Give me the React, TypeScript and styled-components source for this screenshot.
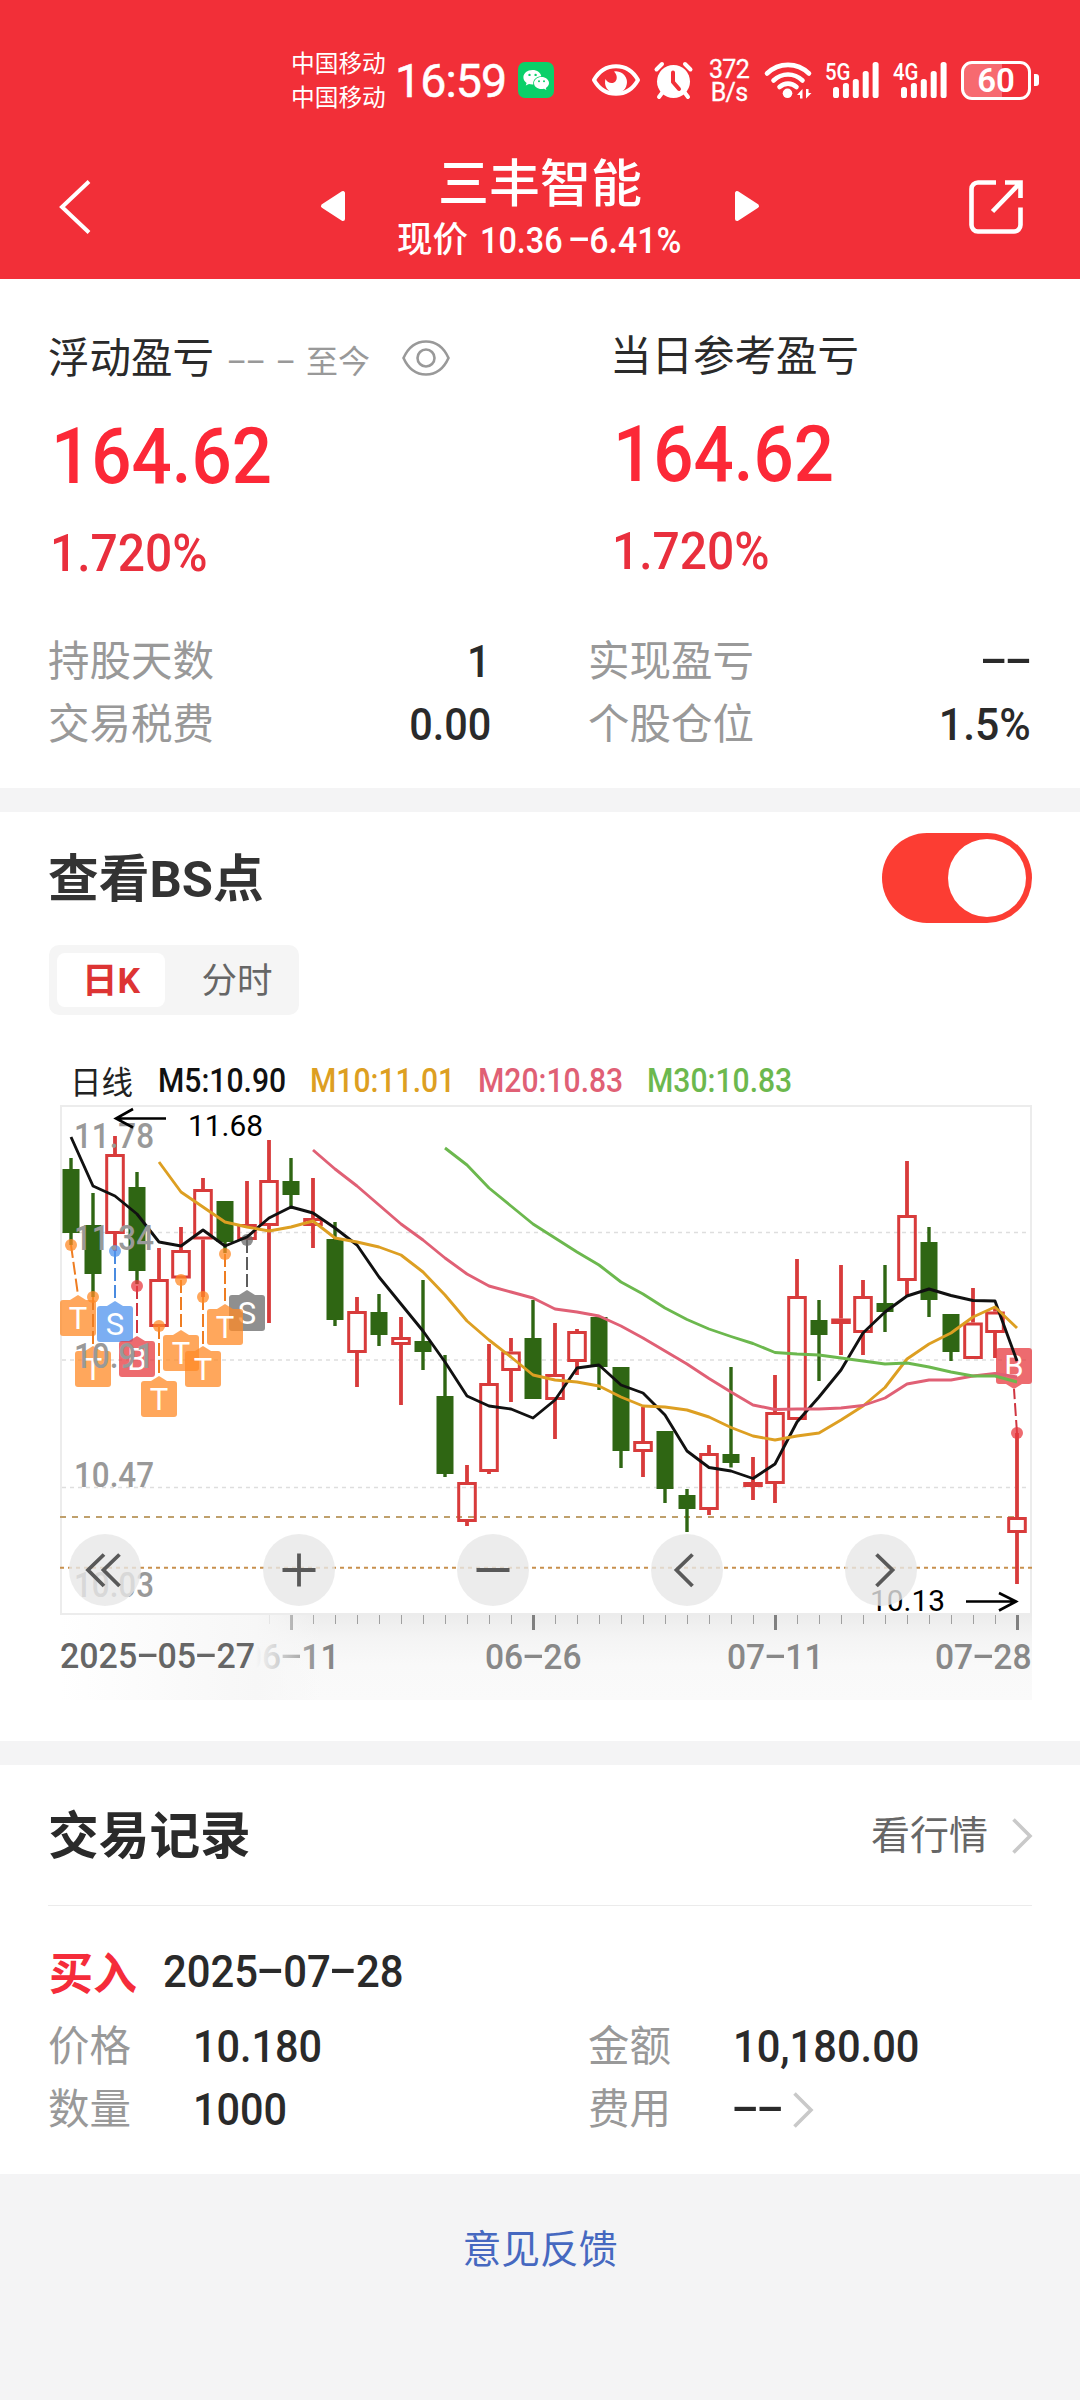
import React from "react";
import styled, { createGlobalStyle } from "styled-components";

const FONT = `Roboto, "Noto Sans CJK SC", sans-serif`;

const GlobalStyle = createGlobalStyle`
  * { box-sizing: border-box; }
  html, body { margin: 0; padding: 0; background: #f4f4f5; }
  body { font-family: ${FONT}; color: #2a2a2a; }
  svg { display: block; flex: none; overflow: visible; }
`;

const Page = styled.main`
  width: 1080px;
  min-height: 2400px;
  background: #f4f4f5;
  overflow: hidden;
`;

/* ---------- shared text pieces ---------- */

const NumBox = styled.span<{ $size: number; $k: number; $right?: boolean; $weight?: number; $color?: string }>`
  display: inline-block;
  flex: none;
  white-space: nowrap;
  font-size: ${(p) => p.$size}px;
  font-weight: ${(p) => p.$weight ?? 500};
  line-height: 1;
  color: ${(p) => p.$color ?? "inherit"};
  transform: scaleX(${(p) => p.$k});
  transform-origin: ${(p) => (p.$right ? "right" : "left")} center;
`;

const DashBox = styled.span`
  display: inline-block;
  width: 0.6em;
  text-align: center;
  transform: translateY(-0.065em) scaleX(2);
`;

type NumProps = { children: string; size: number; k?: number; right?: boolean; weight?: number; color?: string };

const Num = ({ children, size, k = 0.92, right, weight, color }: NumProps) => (
  <NumBox $size={size} $k={k} $right={right} $weight={weight} $color={color}>
    {children.split(/(-)/).map((part, i) => (part === "-" ? <DashBox key={i}>-</DashBox> : part))}
  </NumBox>
);

/* ---------- header ---------- */

const Header = styled.header`
  height: 279px;
  padding-top: 44px;
  background: #f22f38;
  color: #fff;
`;

const StatusBar = styled.div`
  display: flex;
  align-items: center;
  height: 72px;
  padding-left: 291px;
`;

const Carrier = styled.div`
  width: 104px;
  padding-top: 1px;
  font-size: 23.7px;
  line-height: 34px;
  white-space: nowrap;
`;

const Clock = styled.div`
  width: 123px;
  padding-top: 2px;
  font-size: 46.5px;
  font-weight: 400;
  line-height: 72px;
  letter-spacing: -0.9px;
  -webkit-text-stroke: 0.5px #fff;
`;

const StatusIcon = styled.div<{ $gap: number }>`
  margin-left: ${(p) => p.$gap}px;
  flex: none;
`;

const NetSpeed = styled.div`
  width: 40px;
  margin-left: 16px;
  padding-top: 1px;
  font-size: 25px;
  font-weight: 400;
  line-height: 23px;
  letter-spacing: -0.7px;
  text-align: center;
  -webkit-text-stroke: 0.3px #fff;
`;

const SignalBox = styled.div<{ $gap: number }>`
  display: flex;
  width: 56px;
  height: 36px;
  margin-left: ${(p) => p.$gap}px;
`;

const SignalTag = styled.span`
  width: 8px;
  height: 20px;
  font-size: 24px;
  font-weight: 500;
  line-height: 20px;
  white-space: nowrap;
  transform: scaleX(0.85);
  transform-origin: left center;
`;

const NavBar = styled.div`
  display: flex;
  align-items: center;
  height: 163px;
  padding: 19px 0 0 58px;
`;

const TitleBlock = styled.div`
  width: 320px;
  margin: 12px 34px 0;
`;

const StockName = styled.h1`
  margin: 0;
  font-size: 51px;
  font-weight: 500;
  line-height: 56px;
  text-align: center;
`;

const PriceLine = styled.div`
  display: flex;
  align-items: center;
  height: 56px;
  padding-left: 17px;
  font-size: 35.5px;
  font-weight: 500;
`;

const PriceCell = styled.span<{ $w: number }>`
  width: ${(p) => p.$w}px;
  flex: none;
  white-space: nowrap;
  line-height: 1;
`;

const BackIcon = styled.svg`
  margin-right: 226px;
`;
const ShareIcon = styled.svg`
  margin-left: 208px;
`;

const SignalBars = () => (
  <svg width="48" height="36" viewBox="0 0 48 36">
    {[0, 1, 2, 3, 4].map((i) => {
      const h = [11, 15, 19, 27, 36][i];
      return <rect key={i} x={i * 9.9} y={36 - h} width="6" height={h} rx="2.6" fill="#fff" />;
    })}
  </svg>
);

const Signal = ({ tag, gap }: { tag: string; gap: number }) => (
  <SignalBox $gap={gap}>
    <SignalTag>{tag}</SignalTag>
    <SignalBars />
  </SignalBox>
);

const WeChat = () => (
  <svg width="36" height="36" viewBox="0 0 36 36">
    <rect width="36" height="36" rx="7" fill="#0bd069" />
    <path d="M14.500 8c-5.100 0-9.100 3.200-9.100 7.300 0 2.300 1.200 4.200 3.200 5.600L7.800 23.400l3.200-1.500c1.100.3 2.200.5 3.500.5h.8c-.7-4.500 3.300-8.300 8-8.100C22.700 10.600 19.100 8 14.500 8z" fill="#fff" />
    <path d="M31 21c0-3.400-3.400-6.100-7.500-6.100S16 17.600 16 21s3.400 6.100 7.500 6.100c.9 0 1.700-.1 2.500-.3l2.400 1.300-.6-2.200C29.700 24.800 31 23 31 21z" fill="#fff" />
    <g fill="#0bd069">
      <circle cx="11.500" cy="12.900" r="1.200" />
      <circle cx="17.600" cy="12.900" r="1.200" />
      <circle cx="21" cy="19.200" r="1" />
      <circle cx="26" cy="19.200" r="1" />
    </g>
  </svg>
);

const StatusEye = () => (
  <svg width="48" height="34" viewBox="0 0 48 34" fill="none">
    <path d="M2 17C7 8 15 3.200 24 3.200S41 8 46 17c-5 9-13 13.800-22 13.800S7 26 2 17z" stroke="#fff" strokeWidth="4" strokeLinejoin="round" />
    <path d="M22 8.500a11 11 0 1 1-8.500 7.500c1.800 3.600 5.500 5 8.500 3.500 3.600-1.800 3.800-7.500 0-11z" fill="#fff" />
  </svg>
);

const Alarm = () => (
  <svg width="39" height="38" viewBox="0 0 39 38" fill="none">
    <circle cx="19.500" cy="20.500" r="16.500" fill="#fff" />
    <path d="M2.500 8.500l5.500-5.500M36.500 8.500L31 3M8 32l-3 4M31 32l3 4" stroke="#fff" strokeWidth="4" strokeLinecap="round" />
    <path d="M19 11.500V21l6 7" stroke="#f22f38" strokeWidth="4" strokeLinecap="round" strokeLinejoin="round" />
  </svg>
);

const Wifi = () => (
  <svg width="48" height="38" viewBox="0 0 48 38" fill="none" stroke="#fff" strokeWidth="4.600" strokeLinecap="round">
    <path d="M3 12.500C15 1 33 1 45 12.500" />
    <path d="M9.500 19.500C18 11.500 30 11.500 38.500 19.500" />
    <path d="M15.500 26C20.500 21.500 27.500 21.500 32.500 26" />
    <circle cx="23.500" cy="32.300" r="4.800" fill="#fff" stroke="none" />
    <path d="M33 34l5.500-6v9.500H36V34zM47.500 32L42 37.500V28h2.500v4z" fill="#fff" stroke="none" />
  </svg>
);

const BatteryWrap = styled.div`
  display: flex;
  align-items: center;
  margin-left: 12px;
`;
const BatteryCell = styled.div`
  width: 70px;
  height: 39px;
  border: 3px solid #fff;
  border-radius: 11px;
  background: linear-gradient(to right, #f76a70 60%, transparent 60%);
  font-size: 33px;
  font-weight: 600;
  line-height: 34px;
  text-align: center;
`;
const BatteryNub = styled.div`
  width: 5px;
  height: 12px;
  margin-left: 3px;
  border-radius: 0 3px 3px 0;
  background: #fff;
`;

/* ---------- summary ---------- */

const Card = styled.section<{ $h: number; $mb?: number }>`
  height: ${(p) => p.$h}px;
  margin-bottom: ${(p) => p.$mb ?? 0}px;
  background: #fff;
`;

const ProfitRow = styled.div`
  display: flex;
  height: 346px;
  padding-left: 48px;
`;

const ProfitCol = styled.div<{ $w: number; $top: number }>`
  width: ${(p) => p.$w}px;
  padding-top: ${(p) => p.$top}px;
`;

const ProfitHead = styled.div`
  display: flex;
  align-items: center;
  height: 60px;
  font-size: 41.5px;
  line-height: 60px;
  white-space: nowrap;
`;

const Since = styled.span`
  display: flex;
  align-items: center;
  margin: 6px 32px 0 13px;
  color: #999;
  font-size: 32px;
`;
const SinceDash = styled.span<{ $w: number }>`
  display: flex;
  width: ${(p) => p.$w}px;
`;

const BigNumber = styled.div`
  display: flex;
  align-items: center;
  height: 96px;
  margin-top: 20px;
  padding-left: 3px;
  color: #fc2837;
`;
const Percent = styled.div`
  display: flex;
  align-items: center;
  height: 70px;
  margin-top: 13px;
  padding-left: 2px;
  color: #e92f3d;
`;

const StatGrid = styled.div`
  display: grid;
  grid-template-columns: 443px 443px;
  column-gap: 97px;
  grid-auto-rows: 63px;
  padding: 5px 48px 0;
`;

const Stat = styled.div`
  display: flex;
  align-items: center;
  justify-content: space-between;
`;

const Label = styled.span<{ $w?: number }>`
  ${(p) => (p.$w ? `width: ${p.$w}px;` : "")}
  color: #999;
  font-size: 41.5px;
  line-height: 60px;
  white-space: nowrap;
`;

/* ---------- chart section ---------- */

const TitleRow = styled.div`
  display: flex;
  align-items: center;
  justify-content: space-between;
  height: 133px;
  padding: 0 48px 0 48px;
`;

const SectionTitle = styled.h2<{ $color?: string }>`
  margin: 0;
  padding-top: 3px;
  color: ${(p) => p.$color ?? "#2a2a2a"};
  font-size: 50.700px;
  font-weight: 700;
  line-height: 70px;
  white-space: nowrap;
`;

const Toggle = styled.button`
  display: flex;
  justify-content: flex-end;
  width: 150px;
  height: 90px;
  margin-top: -1px;
  padding: 6px;
  border: 0;
  border-radius: 45px;
  background: #fc3d33;
`;
const Knob = styled.span`
  width: 78px;
  height: 78px;
  border-radius: 50%;
  background: #fff;
`;

const Tabs = styled.div`
  display: flex;
  width: 250px;
  height: 70px;
  margin-left: 49px;
  padding: 8px;
  border-radius: 10px;
  background: #f5f5f5;
`;
const Tab = styled.span<{ $active?: boolean }>`
  flex: none;
  width: ${(p) => (p.$active ? 108 : 144)}px;
  padding-top: 1px;
  border-radius: 8px;
  background: ${(p) => (p.$active ? "#fff" : "transparent")};
  color: ${(p) => (p.$active ? "#dd3434" : "#666")};
  font-size: 35.5px;
  font-weight: ${(p) => (p.$active ? 700 : 400)};
  line-height: 54px;
  text-align: center;
`;

const Legend = styled.div`
  display: flex;
  align-items: center;
  height: 50px;
  margin-top: 40px;
  padding-left: 70px;
  font-size: 30.5px;
`;
const LegendItem = styled.span<{ $w: number }>`
  display: flex;
  width: ${(p) => p.$w}px;
`;
const LegendName = styled.span`
  width: 88px;
  color: #222;
  font-size: 31.5px;
`;

const ChartBox = styled.div`
  width: 972px;
  margin-left: 60px;
`;

const Axis = styled.div`
  height: 85px;
  background: linear-gradient(to bottom, #ececec 0, #f4f4f4 22px, #f9f9f9 50px, #fafafa 100%);
`;
const AxisFade = styled.div`
  position: absolute;
  inset: 0;
  background: linear-gradient(to right, #fff 0, #f7f7f7 196px, rgba(248, 248, 248, 0) 262px);
`;
const AxisInner = styled.div`
  position: relative;
  height: 85px;
`;
const DateRow = styled.div`
  display: flex;
  height: 34px;
  margin-top: 9px;
  color: #888;
`;
const DateCell = styled.span<{ $ml: number }>`
  width: 97px;
  margin-left: ${(p) => p.$ml}px;
`;
const StartDate = styled.span`
  position: absolute;
  left: 0;
  top: 24px;
  color: #666;
`;

const GREEN = "#2f6613";
const RED = "#d83b3b";

/* high, body top, body bottom, low — in drawing units; g: falling day */
const candles: [string, number, number, number, number][] = [
  ["g", 1158, 1169, 1233, 1245],
  ["g", 1193, 1225, 1274, 1297],
  ["r", 1136, 1154, 1234, 1251],
  ["g", 1172, 1187, 1271, 1284],
  ["r", 1248, 1279, 1327, 1327],
  ["r", 1227, 1250, 1278.5, 1278.5],
  ["r", 1178, 1189, 1239.5, 1297],
  ["g", 1201, 1201, 1242, 1253],
  ["r", 1181, 1224, 1240, 1240],
  ["r", 1140, 1180, 1226, 1323],
  ["g", 1158, 1181, 1195, 1209],
  ["r", 1178, 1218, 1226, 1248],
  ["g", 1222, 1239, 1320, 1326],
  ["r", 1297, 1311, 1353, 1387],
  ["g", 1294, 1312, 1335, 1346],
  ["r", 1317, 1337, 1345, 1405],
  ["g", 1280, 1341, 1352, 1370],
  ["g", 1355, 1396, 1474, 1477],
  ["r", 1465, 1482, 1522, 1526],
  ["r", 1344, 1383, 1472, 1474],
  ["r", 1338, 1351.5, 1371, 1402],
  ["g", 1300, 1338, 1399, 1399],
  ["r", 1323, 1374, 1400, 1439],
  ["r", 1329, 1331, 1362, 1375],
  ["g", 1317, 1317, 1367, 1390],
  ["g", 1367, 1367, 1451, 1468],
  ["r", 1407, 1441, 1452, 1477],
  ["g", 1431, 1431, 1489, 1503],
  ["g", 1489, 1495, 1509, 1532],
  ["r", 1445, 1453, 1510, 1515],
  ["g", 1367, 1454, 1463, 1467.5],
  ["r", 1457, 1482, 1487, 1500],
  ["r", 1375, 1412, 1484, 1503],
  ["r", 1259, 1296, 1420, 1420],
  ["g", 1300, 1320, 1335, 1381],
  ["r", 1265, 1318.5, 1324, 1355],
  ["r", 1280, 1296, 1333, 1355],
  ["g", 1265, 1303, 1312, 1332],
  ["r", 1161, 1215, 1281, 1296],
  ["g", 1227, 1242, 1300, 1317],
  ["g", 1314, 1314, 1352, 1361],
  ["r", 1288, 1322.5, 1359, 1359],
  ["r", 1308, 1311.5, 1333, 1358],
  ["r", 1433, 1517, 1533, 1584],
];

const m5 = [57, 106, 116, 134, 162, 166, 150, 166, 157, 138, 127, 133, 148, 165, 197, 224, 251, 282, 316, 326, 329, 338, 320, 288, 285, 305, 313, 335, 371, 387.5, 391, 398.5, 384, 342, 317, 290, 253, 232, 216, 209, 215.500, 220.500, 221, 281];
const m10 = [82, 112, 127, 142, 147, 151, 147, 141, 158, 162, 167, 175, 192, 215, 241, 260, 277, 295, 300, 302, 306, 317, 326, 327, 330, 337, 347.5, 356, 360, 356, 353, 340, 326, 307.5, 279, 264, 253, 237, 227, 248];
const m20 = [70, 89, 106, 125, 144, 160, 178, 194, 206, 212, 218, 229, 232, 236, 246, 258, 271, 284, 298.5, 312, 325, 329.5, 329, 329, 328, 325.5, 318, 304, 300, 300, 296, 293.5, 297];
const m30 = [68, 85, 108, 126, 144, 158, 172, 185, 202, 214, 228, 239.5, 249, 256.5, 263.5, 272.5, 274, 275, 278, 281, 284, 283, 287, 292, 296, 296, 302];

const cx = (i: number) => 71 + 22 * i;
const toPoints = (values: number[]) =>
  values.map((v, i) => `${cx(i + 44 - values.length)},${1080 + v}`).join(" ");

type Tag = { letter: string; x: number; y: number; dx: number; dy: number; fill: string; line: string; below?: boolean };
const OR = "#ff8a26";
const tags: Tag[] = [
  { letter: "T", x: 60, y: 1300, dx: 71, dy: 1245, fill: OR, line: "#ee7d22" },
  { letter: "T", x: 75, y: 1351, dx: 93, dy: 1297, fill: OR, line: "#ee7d22" },
  { letter: "S", x: 97, y: 1306, dx: 115, dy: 1251, fill: "#4f93ee", line: "#4a8be0" },
  { letter: "B", x: 119, y: 1341, dx: 137, dy: 1286, fill: "#e83a40", line: "#cf3540" },
  { letter: "T", x: 141, y: 1381, dx: 159, dy: 1326, fill: OR, line: "#ee7d22" },
  { letter: "T", x: 163, y: 1335, dx: 181, dy: 1280, fill: OR, line: "#ee7d22" },
  { letter: "T", x: 185, y: 1351, dx: 203, dy: 1297, fill: OR, line: "#ee7d22" },
  { letter: "S", x: 229, y: 1295, dx: 247, dy: 1240, fill: "#6a6a6a", line: "#5c5c5c" },
  { letter: "T", x: 207, y: 1309, dx: 225, dy: 1254, fill: OR, line: "#ee7d22" },
  { letter: "B", x: 996, y: 1348, dx: 1017, dy: 1433, fill: "#e83a40", line: "#cf3540", below: true },
];

const TradeTag = ({ t }: { t: Tag }) => {
  const mx = t.x + 18;
  const tipY = t.below ? t.y + 41 : t.y - 5;
  return (
    <g>
      <line x1={t.dx} y1={t.dy} x2={mx} y2={tipY} stroke={t.line} strokeWidth="2" strokeDasharray="13 4" />
      <circle cx={t.dx} cy={t.dy} r="6" fill={t.fill} opacity="0.75" />
      <g opacity="0.75" fill={t.fill}>
        <rect x={t.x} y={t.y} width="36" height="36" rx="3" />
        <path d={t.below ? `M${mx - 8} ${t.y + 36}h16l-8 5z` : `M${mx - 8} ${t.y}h16l-8 -5z`} />
      </g>
      <text x={mx} y={t.y + 29} fontSize="31" fill="#fff" textAnchor="middle">
        {t.letter}
      </text>
    </g>
  );
};

const buttons = [
  { x: 105, d: "M104 1554.500L88 1570l16 16M119.500 1554.500L103.500 1570l16 16" },
  { x: 299, d: "M282.500 1570h33M299 1553.500v33" },
  { x: 493, d: "M476.500 1570h33" },
  { x: 687, d: "M692.500 1554.500L676.500 1570l16 16" },
  { x: 881, d: "M876.500 1554.500L892.500 1570l-16 16" },
];

const axisLabels: [string, number][] = [
  ["11.78", 1148],
  ["11.34", 1250],
  ["10.91", 1368],
  ["10.47", 1487],
  ["10.03", 1597],
];

const PriceChart = () => (
  <svg width="972" height="510" viewBox="60 1105 972 510" fontFamily={FONT}>
    <rect x="61" y="1106" width="970" height="508" fill="none" stroke="#ececec" strokeWidth="2" />
    <g stroke="#dedede" strokeWidth="1.300" strokeDasharray="4 4">
      <path d="M62 1232.500h968M62 1360h968M62 1487.500h968" />
    </g>
    <path d="M60 1517h960" stroke="#bfa06c" strokeWidth="2" strokeDasharray="6 6" />
    <path d="M60 1567.700h972" stroke="#c8904d" strokeWidth="2" strokeDasharray="4 4" />

    {candles.map(([kind, hi, top, bot, lo], i) =>
      kind === "g" ? (
        <g key={i} fill={GREEN}>
          <rect x={cx(i) - 1.7} y={hi} width="3.400" height={lo - hi} />
          <rect x={cx(i) - 8.5} y={top} width="17" height={bot - top} />
        </g>
      ) : (
        <g key={i} fill="none" stroke={RED} strokeWidth="3">
          <path d={`M${cx(i)} ${hi}V${top}M${cx(i)} ${bot}V${lo}`} strokeWidth="3.800" />
          <rect x={cx(i) - 8.3} y={top + 1.5} width="16.600" height={bot - top - 3} />
        </g>
      )
    )}

    {tags.map((t, i) => (
      <TradeTag key={i} t={t} />
    ))}

    <g fill="none" strokeWidth="2.900" strokeLinejoin="round">
      <polyline points={toPoints(m5)} stroke="#111" />
      <polyline points={toPoints(m10)} stroke="#dd9f22" />
      <polyline points={toPoints(m20)} stroke="#e06075" />
      <polyline points={toPoints(m30)} stroke="#6cb84e" />
    </g>

    <g fill="#999" fontSize="35" fontWeight="500">
      {axisLabels.map(([label, y]) => (
        <text key={label} x="74" y={y} textLength="80" lengthAdjust="spacingAndGlyphs">
          {label}
        </text>
      ))}
    </g>

    <g fill="#000" fontSize="30">
      <text x="188" y="1136" textLength="75" lengthAdjust="spacingAndGlyphs">11.68</text>
      <text x="870" y="1611" textLength="75" lengthAdjust="spacingAndGlyphs">10.13</text>
    </g>
    <path d="M166 1118.500H116M133 1109l-17 9.500 17 9" fill="none" stroke="#000" strokeWidth="2.600" />
    <path d="M966 1601.500h50M999 1593l17 8.500-17 9" fill="none" stroke="#000" strokeWidth="2.600" />

    {buttons.map((b) => (
      <g key={b.x}>
        <circle cx={b.x} cy="1570" r="36" fill="#e7e7e7" opacity="0.8" />
        <path d={b.d} fill="none" stroke="#595959" strokeWidth="3.800" />
      </g>
    ))}
  </svg>
);

const AxisTicks = () => (
  <svg width="972" height="16" viewBox="60 0 972 16">
    {candles.map((_, i) => {
      if (i < 9) return null;
      const major = (i - 10) % 11 === 0;
      return (
        <rect
          key={i}
          x={cx(i) - (major ? 1 : 0)}
          y="0"
          width={major ? 3 : 1}
          height={major ? 15 : 9}
          fill={major ? "#808080" : "#a0a0a0"}
        />
      );
    })}
  </svg>
);

/* ---------- records ---------- */

const MoreLink = styled.a`
  display: flex;
  align-items: center;
  gap: 24px;
  padding-top: 1px;
  color: #666;
  font-size: 39px;
  line-height: 60px;
  white-space: nowrap;
`;

const RecordHead = styled.div`
  display: flex;
  align-items: center;
  justify-content: space-between;
  height: 141px;
  margin: 0 48px;
  border-bottom: 1px solid #ebebeb;
`;

const TradeLine = styled.div`
  display: flex;
  align-items: center;
  height: 64px;
  margin-top: 33px;
  padding-left: 49px;
`;
const Side = styled.span`
  width: 114px;
  color: #f52c3a;
  font-size: 44px;
  font-weight: 700;
`;

const TradeGrid = styled.div`
  display: grid;
  grid-template-columns: 540px 491px;
  grid-auto-rows: 63px;
  padding: 12px 0 0 48px;
`;
const TradeCell = styled.div`
  display: flex;
  align-items: center;
`;

const Feedback = styled.footer`
  display: flex;
  justify-content: center;
  padding-top: 46px;
  color: #4668c0;
  font-size: 38.8px;
  line-height: 60px;
`;

const Chevron = () => (
  <svg width="20" height="36" viewBox="0 0 20 36" fill="none">
    <path d="M1.500 1.500L18 18 1.500 34.500" stroke="#c9c9c9" strokeWidth="3.600" />
  </svg>
);

const FeeValue = styled.span`
  display: flex;
  width: 60px;
`;

export default function App() {
  return (
    <Page>
      <GlobalStyle />
      <Header>
        <StatusBar>
          <Carrier>
            中国移动
            <br />
            中国移动
          </Carrier>
          <Clock>16:59</Clock>
          <WeChat />
          <StatusIcon $gap={38}><StatusEye /></StatusIcon>
          <StatusIcon $gap={14}><Alarm /></StatusIcon>
          <NetSpeed>372<br />B/s</NetSpeed>
          <StatusIcon $gap={15}><Wifi /></StatusIcon>
          <Signal tag="5G" gap={13} />
          <Signal tag="4G" gap={12} />
          <BatteryWrap>
            <BatteryCell>60</BatteryCell>
            <BatteryNub />
          </BatteryWrap>
        </StatusBar>
        <NavBar>
          <BackIcon width="36" height="56" viewBox="0 0 36 56" fill="none">
            <path d="M31 2.500L4 28l27 25.500" stroke="#fff" strokeWidth="4" />
          </BackIcon>
          <svg width="26" height="32" viewBox="0 0 26 32">
            <path d="M3 15L23 2v26z" fill="#fff" stroke="#fff" strokeWidth="4" strokeLinejoin="round" />
          </svg>
          <TitleBlock>
            <StockName>三丰智能</StockName>
            <PriceLine>
              <PriceCell $w={83}>现价</PriceCell>
              <PriceCell $w={89}><Num size={36} k={0.9}>10.36</Num></PriceCell>
              <PriceCell $w={120}><Num size={36} k={0.94}>-6.41%</Num></PriceCell>
            </PriceLine>
          </TitleBlock>
          <svg width="26" height="32" viewBox="0 0 26 32">
            <path d="M23 15L3 2v26z" fill="#fff" stroke="#fff" strokeWidth="4" strokeLinejoin="round" />
          </svg>
          <ShareIcon width="56" height="56" viewBox="0 0 56 56" fill="none" stroke="#fff" strokeWidth="4.600">
            <path d="M28 3.500H10a6.500 6.500 0 0 0-6.500 6.500v36A6.500 6.500 0 0 0 10 52.500h36a6.500 6.500 0 0 0 6.500-6.500V28.500" />
            <path d="M37 3.500h15.500V19M52 4L24.500 32.500" />
          </ShareIcon>
        </NavBar>
      </Header>

      <Card $h={509} $mb={24}>
        <ProfitRow>
          <ProfitCol $w={562} $top={50}>
            <ProfitHead>
              浮动盈亏
              <Since>
                <SinceDash $w={49}><Num size={34} k={0.95} weight={400}>--</Num></SinceDash>
                <SinceDash $w={30}><Num size={34} k={0.95} weight={400}>-</Num></SinceDash>
                至今
              </Since>
              <svg width="48" height="36" viewBox="0 0 48 36" fill="none" stroke="#999" strokeWidth="2.600">
                <path d="M1.500 17C6 7 14 0.500 24 0.500S42 7 46.500 17C42 27 34 33.500 24 33.500S6 27 1.500 17z" />
                <circle cx="24" cy="17" r="8.500" />
              </svg>
            </ProfitHead>
            <BigNumber><Num size={77} k={0.92}>164.62</Num></BigNumber>
            <Percent><Num size={51} k={0.94}>1.720%</Num></Percent>
          </ProfitCol>
          <ProfitCol $w={420} $top={48}>
            <ProfitHead>当日参考盈亏</ProfitHead>
            <BigNumber><Num size={77} k={0.92}>164.62</Num></BigNumber>
            <Percent><Num size={51} k={0.94}>1.720%</Num></Percent>
          </ProfitCol>
        </ProfitRow>
        <StatGrid>
          <Stat><Label>持股天数</Label><Num size={45} right>1</Num></Stat>
          <Stat><Label>实现盈亏</Label><Num size={45} right>--</Num></Stat>
          <Stat><Label>交易税费</Label><Num size={45} right>0.00</Num></Stat>
          <Stat><Label>个股仓位</Label><Num size={45} right k={0.95}>1.5%</Num></Stat>
        </StatGrid>
      </Card>

      <Card $h={929} $mb={24}>
        <TitleRow>
          <SectionTitle $color="#333">查看BS点</SectionTitle>
          <Toggle><Knob /></Toggle>
        </TitleRow>
        <Tabs>
          <Tab $active>日K</Tab>
          <Tab>分时</Tab>
        </Tabs>
        <Legend>
          <LegendName>日线</LegendName>
          <LegendItem $w={152}><Num size={34} k={0.885} color="#111">M5:10.90</Num></LegendItem>
          <LegendItem $w={168}><Num size={34} k={0.885} color="#dd9f22">M10:11.01</Num></LegendItem>
          <LegendItem $w={169}><Num size={34} k={0.885} color="#e06075">M20:10.83</Num></LegendItem>
          <LegendItem $w={168}><Num size={34} k={0.885} color="#6cb84e">M30:10.83</Num></LegendItem>
        </Legend>
        <ChartBox>
          <PriceChart />
          <Axis>
            <AxisInner>
              <AxisTicks />
              <DateRow>
                <DateCell $ml={183}><Num size={35} k={0.96}>06-11</Num></DateCell>
                <DateCell $ml={145}><Num size={35} k={0.96}>06-26</Num></DateCell>
                <DateCell $ml={145}><Num size={35} k={0.96}>07-11</Num></DateCell>
                <DateCell $ml={111}><Num size={35} k={0.96}>07-28</Num></DateCell>
              </DateRow>
              <AxisFade />
              <StartDate><Num size={35} k={0.97}>2025-05-27</Num></StartDate>
            </AxisInner>
          </Axis>
        </ChartBox>
      </Card>

      <Card $h={409}>
        <RecordHead>
          <SectionTitle>交易记录</SectionTitle>
          <MoreLink>
            看行情
            <Chevron />
          </MoreLink>
        </RecordHead>
        <TradeLine>
          <Side>买入</Side>
          <Num size={45} k={0.93}>2025-07-28</Num>
        </TradeLine>
        <TradeGrid>
          <TradeCell><Label $w={145}>价格</Label><Num size={45}>10.180</Num></TradeCell>
          <TradeCell><Label $w={145}>金额</Label><Num size={45} k={0.925}>10,180.00</Num></TradeCell>
          <TradeCell><Label $w={145}>数量</Label><Num size={45}>1000</Num></TradeCell>
          <TradeCell>
            <Label $w={145}>费用</Label>
            <FeeValue><Num size={45}>--</Num></FeeValue>
            <Chevron />
          </TradeCell>
        </TradeGrid>
      </Card>

      <Feedback>意见反馈</Feedback>
    </Page>
  );
}
